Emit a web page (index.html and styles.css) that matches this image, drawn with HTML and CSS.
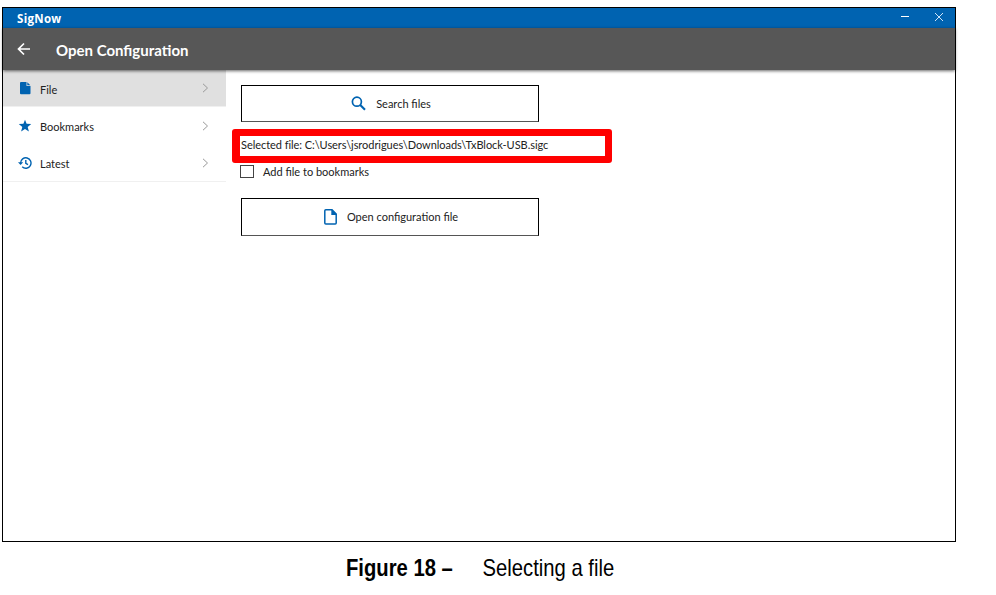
FILE: index.html
```html
<!DOCTYPE html>
<html lang="en">
<head>
    <meta charset="UTF-8">
    <title>SigNow</title>
    <link rel="stylesheet" href="styles.css">
</head>
<body>

<div class="window">
    <div class="title-bar">
        <span class="app-name">SigNow</span>
        <svg class="minimize" width="10" height="10" viewBox="0 0 10 10"><path d="M1 3.5h8" stroke="#fff"/></svg>
        <svg class="close" width="10" height="10" viewBox="0 0 10 10"><path d="M1 0l8 8M9 0l-8 8" stroke="#cfe4f7"/></svg>
    </div>

    <div class="header">
        <svg width="14" height="14" viewBox="0 0 14 14" fill="none" stroke="#fff" stroke-width="1.7"><path d="M13 7H2M7 1.5L1.5 7L7 12.5"/></svg>
        <h1>Open Configuration</h1>
    </div>

    <div class="content">
        <!-- Sidebar -->
        <div class="sidebar">
            <div class="nav-item active">
                <svg class="icon" width="14" height="14" viewBox="0 0 14 14"><path d="M3 1h5.5v4h4v7.2q0 1-1 1H3q-1 0-1-1V2q0-1 1-1zM9.3 1.2L12.3 4.2h-3z" fill="#0063b1"/></svg>
                <span class="label">File</span>
                <svg class="chevron" width="7" height="10" viewBox="0 0 7 10"><path d="M1 .8L5.5 5L1 9.2"/></svg>
            </div>
            <div class="nav-item">
                <svg class="icon" width="14" height="14" viewBox="0 0 14 14"><path d="M7 .7l1.6 4.1 4.6.3-3.5 2.8 1.2 4.6L7 10l-3.9 2.5 1.2-4.6L.8 5.1l4.6-.3z" fill="#0063b1"/></svg>
                <span class="label">Bookmarks</span>
                <svg class="chevron" width="7" height="10" viewBox="0 0 7 10"><path d="M1 .8L5.5 5L1 9.2"/></svg>
            </div>
            <div class="nav-item">
                <svg class="icon" width="14" height="14" viewBox="0 0 14 14" fill="none" stroke="#0063b1" stroke-width="1.4"><path d="M2.6 7A5.2 5.2 0 1 1 4.2 10.8M7.8 4v3.3l2.2 1.3"/><path d="M0 6.3h5.2L2.6 9z" fill="#0063b1" stroke="none"/></svg>
                <span class="label">Latest</span>
                <svg class="chevron" width="7" height="10" viewBox="0 0 7 10"><path d="M1 .8L5.5 5L1 9.2"/></svg>
            </div>
        </div>

        <!-- File selection -->
        <div class="main">
            <div class="button search-button">
                <svg width="15" height="15" viewBox="0 0 15 15" fill="none" stroke="#0063b1"><circle cx="5.9" cy="5.7" r="4.5" stroke-width="1.7"/><path d="M9 8.8L14 13.8" stroke-width="2.1"/></svg>
                <span>Search files</span>
            </div>
            <div class="selected-file">
                <span>Selected file: C:\Users\jsrodrigues\Downloads\TxBlock-USB.sigc</span>
            </div>
            <div class="checkbox-row">
                <div class="checkbox"></div>
                <span>Add file to bookmarks</span>
            </div>
            <div class="button open-button">
                <svg width="13" height="16" viewBox="0 0 13 16"><path d="M1.8.8H8l4.2 4.2v9q0 1-1 1H1.8q-1 0-1-1V1.8q0-1 1-1z" fill="none" stroke="#0063b1" stroke-width="1.5"/><path d="M7.3 .8h1L12.4 5v1H7.3z" fill="#0063b1"/></svg>
                <span>Open configuration file</span>
            </div>
        </div>
    </div>
</div>

<div class="caption">
    <strong>Figure 18 –</strong>
    <span>Selecting a file</span>
</div>

</body>
</html>
```
FILE: styles.css
```css
body {
    margin: 0;
    padding: 7px 0 0 2px;
    background-color: #fff;
    font-family: Lato, sans-serif;
    font-size: 11px;
    color: #222;
    white-space: nowrap;
    overflow: hidden;
}

.window {
    box-sizing: border-box;
    width: 954px;
    height: 535px;
    border: 1px solid #000;
}

.title-bar {
    display: flex;
    align-items: center;
    height: 20px;
    padding: 0 11px 0 14px;
    background-color: #0063b1;
    color: #fff;
}

.app-name {
    flex: 1;
    font-family: "Open Sans", sans-serif;
    font-size: 11.5px;
    font-weight: bold;
    letter-spacing: 0.3px;
}

.minimize {
    margin-right: 24px;
}

.header {
    display: flex;
    align-items: center;
    position: relative;
    height: 42px;
    padding-left: 14px;
    background-color: #575757;
    box-shadow: 0 1px 3px rgba(0,0,0,0.6);
    color: #fff;
}

.header h1 {
    margin: 0 0 0 25px;
    padding-top: 1px;
    font-size: 15px;
    font-weight: bold;
}

.content {
    display: flex;
}

.sidebar {
    width: 223px;
    height: 111px;
    border-bottom: 1px solid #f0f0f0;
}

.nav-item {
    box-sizing: border-box;
    display: flex;
    align-items: center;
    height: 37px;
    padding: 0 17px 0 15px;
}

.nav-item.active {
    background-color: #e0e0e0;
    border-bottom: 1px solid #f0f0f0;
}

.label {
    flex: 1;
    margin-left: 8px;
    padding-top: 2px;
}

.chevron {
    fill: none;
    stroke: #999;
}

.main {
    padding: 15px 0 0 15px;
}

.button {
    box-sizing: border-box;
    display: flex;
    align-items: center;
    justify-content: center;
    width: 298px;
    height: 38px;
    padding-left: 2px;
    border: 1px solid #000;
    border-bottom-color: #555;
}

.button span {
    margin-left: 10px;
    padding-bottom: 1px;
}

.search-button {
    height: 37px;
}

.selected-file {
    box-sizing: border-box;
    width: 380px;
    height: 34px;
    margin: 7px 0 0 -9px;
    border: 7px solid #f00;
    border-left-width: 8px;
    border-radius: 3px;
    line-height: 17px;
    padding-left: 1px;
    letter-spacing: -0.05px;
}

.checkbox-row {
    display: flex;
    align-items: center;
    height: 14px;
    margin: 1px 0 0 -1px;
}

.checkbox {
    box-sizing: border-box;
    width: 14px;
    height: 13px;
    margin-right: 9px;
    border: 1px solid #444;
}

.open-button {
    margin-top: 20px;
}

.caption {
    display: flex;
    margin: 11px 0 0 344px;
    font-family: "Liberation Sans", sans-serif;
    font-size: 24px;
    line-height: 29px;
    color: #000;
    transform: scaleX(0.843);
    transform-origin: left;
}

.caption strong {
    width: 162px;
}
```
